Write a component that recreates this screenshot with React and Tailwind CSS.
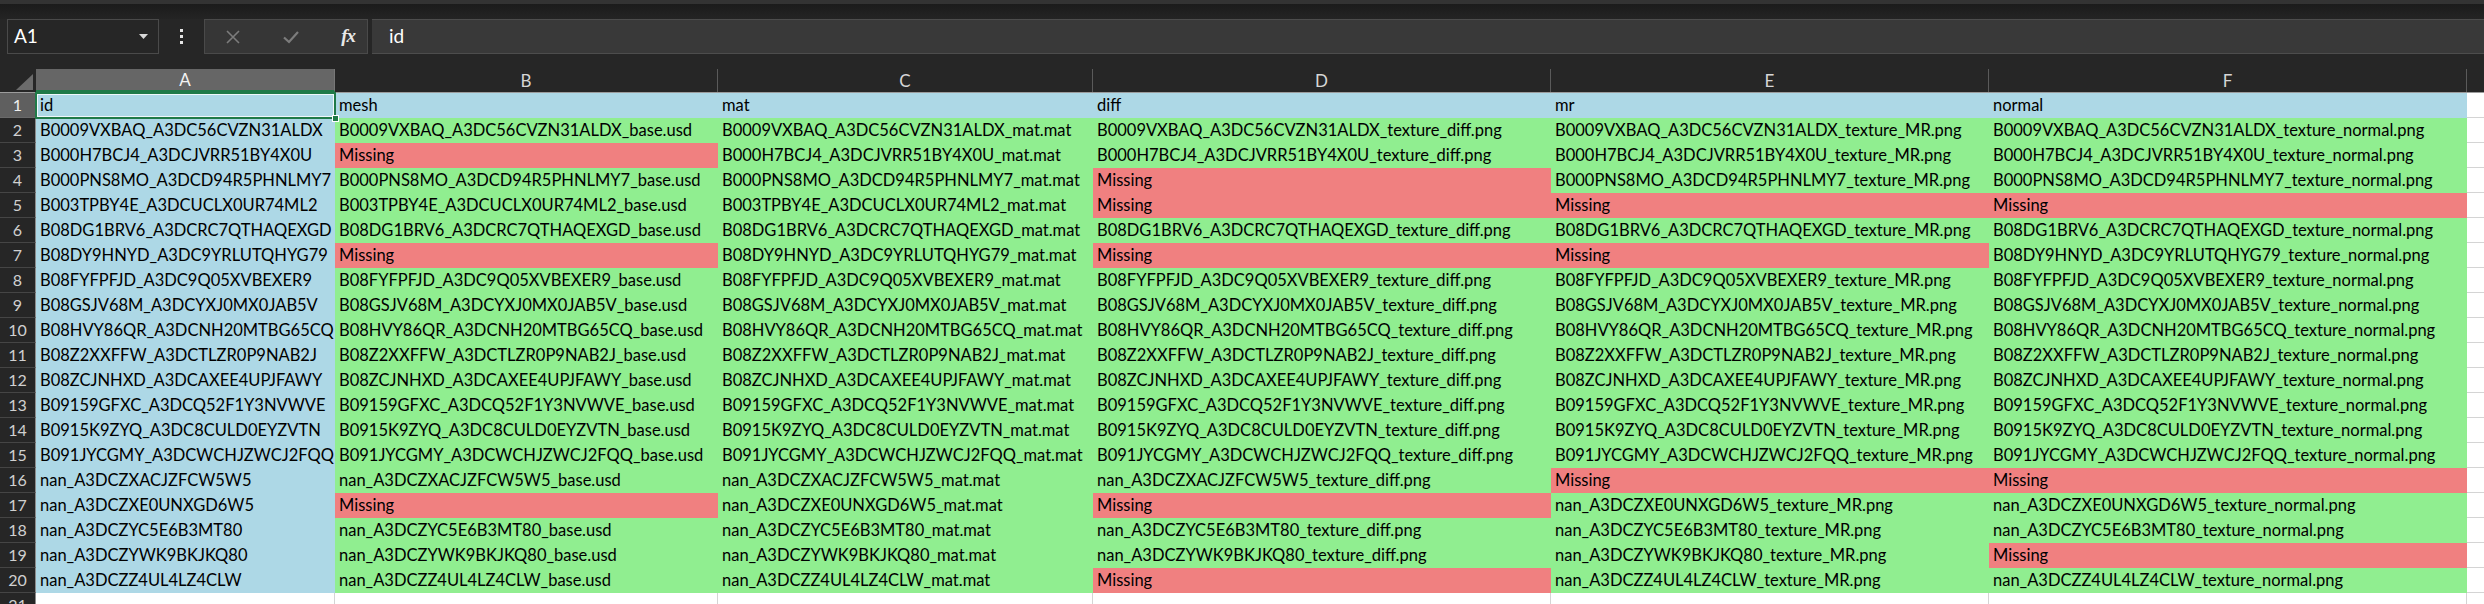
import React from 'react';

// column widths taken from the sheet (px)
const COLS = [
  { key: 'A', w: 'w-[299px]' },
  { key: 'B', w: 'w-[383px]' },
  { key: 'C', w: 'w-[375px]' },
  { key: 'D', w: 'w-[458px]' },
  { key: 'E', w: 'w-[438px]' },
  { key: 'F', w: 'w-[478px]' },
];

const HEAD = ['id', 'mesh', 'mat', 'diff', 'mr', 'normal'];
const SUFFIX = ['_base.usd', '_mat.mat', '_texture_diff.png', '_texture_MR.png', '_texture_normal.png'];

// 1 = file found, 0 = Missing (mesh, mat, diff, mr, normal)
const ROWS = [
  ['B0009VXBAQ_A3DC56CVZN31ALDX', '11111'],
  ['B000H7BCJ4_A3DCJVRR51BY4X0U', '01111'],
  ['B000PNS8MO_A3DCD94R5PHNLMY7', '11011'],
  ['B003TPBY4E_A3DCUCLX0UR74ML2', '11000'],
  ['B08DG1BRV6_A3DCRC7QTHAQEXGD', '11111'],
  ['B08DY9HNYD_A3DC9YRLUTQHYG79', '01001'],
  ['B08FYFPFJD_A3DC9Q05XVBEXER9', '11111'],
  ['B08GSJV68M_A3DCYXJ0MX0JAB5V', '11111'],
  ['B08HVY86QR_A3DCNH20MTBG65CQ', '11111'],
  ['B08Z2XXFFW_A3DCTLZR0P9NAB2J', '11111'],
  ['B08ZCJNHXD_A3DCAXEE4UPJFAWY', '11111'],
  ['B09159GFXC_A3DCQ52F1Y3NVWVE', '11111'],
  ['B0915K9ZYQ_A3DC8CULD0EYZVTN', '11111'],
  ['B091JYCGMY_A3DCWCHJZWCJ2FQQ', '11111'],
  ['nan_A3DCZXACJZFCW5W5', '11100'],
  ['nan_A3DCZXE0UNXGD6W5', '01011'],
  ['nan_A3DCZYC5E6B3MT80', '11111'],
  ['nan_A3DCZYWK9BKJKQ80', '11110'],
  ['nan_A3DCZZ4UL4LZ4CLW', '11011'],
];

const cellText = 'px-[4px] whitespace-nowrap overflow-hidden leading-[25px] text-[16.5px] text-black';

function RowNum({ n, active }) {
  return (
    <div
      className={`w-[36px] shrink-0 h-[25px] flex items-center justify-center text-[16px] border-b border-r ${
        active ? 'bg-[#5f5f5f] text-[#f0f0f0] border-b-[#6a6a6a] border-r-[#9a9a9a]' : 'bg-[#262626] text-[#d0d0d0] border-b-[#454545] border-r-[#8c8c8c]'
      }`}
    >
      {n}
    </div>
  );
}

function FormulaBar() {
  return (
    <div className="h-[35px] flex items-stretch pl-[7px]">
      {/* name box */}
      <div className="w-[152px] border border-[#4a4a4a] bg-[#262626] flex items-center justify-between pl-[6px] pr-[10px]">
        <span className="text-white text-[19px]">A1</span>
        <svg width="9" height="5" viewBox="0 0 9 5">
          <polygon points="0,0 9,0 4.5,5" fill="#d8d8d8" />
        </svg>
      </div>
      {/* vertical dots */}
      <div className="w-[45px] flex flex-col items-center justify-center gap-[3px]">
        <span className="w-[3px] h-[3px] bg-[#e6e6e6]" />
        <span className="w-[3px] h-[3px] bg-[#e6e6e6]" />
        <span className="w-[3px] h-[3px] bg-[#e6e6e6]" />
      </div>
      {/* cancel / enter / fx */}
      <div className="w-[164px] border border-[#4a4a4a] bg-[#363636] flex items-center pl-[20px] pr-[12px] justify-between">
        <svg width="16" height="16" viewBox="0 0 16 16">
          <path d="M2 2 L14 14 M14 2 L2 14" stroke="#7c7c7c" strokeWidth="1.6" fill="none" />
        </svg>
        <svg width="18" height="16" viewBox="0 0 18 16">
          <path d="M2 8.5 L7 13 L16 3" stroke="#7c7c7c" strokeWidth="2.2" fill="none" />
        </svg>
        <span className="text-[#e8e8e8] text-[19px] italic [font-family:'Liberation_Serif',serif] font-bold tracking-[-1px]">fx</span>
      </div>
      {/* formula input */}
      <div className="flex-1 ml-[4px] bg-[#393939] border-y border-[#4d4d4d] flex items-center pl-[17px]">
        <span className="text-white text-[19px]">id</span>
      </div>
    </div>
  );
}

function ColumnHeader() {
  return (
    <div className="flex h-[24px] border-b border-[#9c9c9c]">
      {/* select-all corner */}
      <div className="w-[36px] shrink-0 bg-[#262626] flex items-end justify-end pr-[3px] pb-[2px]">
        <svg width="17" height="16" viewBox="0 0 17 16">
          <polygon points="17,0 17,16 0,16" fill="#6b6b6b" />
        </svg>
      </div>
      {COLS.map((c, i) => (
        <div
          key={c.key}
          className={`${c.w} shrink-0 flex items-center justify-center text-[17px] border-r ${
            i === 0 ? 'bg-[#666666] text-[#f2f2f2] border-[#777777] border-b-2 border-b-[#1f7a48]' : 'bg-[#262626] text-[#d6d6d6] border-[#5a5a5a]'
          }`}
        >
          {c.key}
        </div>
      ))}
      <div className="flex-1 bg-[#262626]" />
    </div>
  );
}

function DataCell({ w, fill, children }) {
  return <div className={`${w} shrink-0 h-[25px] ${fill} ${cellText}`}>{children}</div>;
}

function Tail() {
  return <div className="flex-1 h-[25px] bg-white border-b border-[#d4d4d4]" />;
}

export default function App() {
  return (
    <div className="w-[2484px] h-[604px] overflow-hidden bg-[#262626] [font-family:Lato,'Liberation_Sans',sans-serif]">
      <div className="h-[4px] bg-[#333333]" />
      <div className="h-[15px] bg-gradient-to-b from-[#1b1b1b] to-[#242424]" />
      <FormulaBar />
      <div className="h-[15px] bg-[#262626]" />

      <ColumnHeader />

      {/* row 1: header names */}
      <div className="flex">
        <RowNum n={1} active />
        <div className="w-[299px] shrink-0 h-[25px] bg-[#add8e6] relative">
          <div className={cellText}>id</div>
          {/* active cell frame */}
          <div className="absolute -left-[1px] -top-[1px] w-[301px] h-[27px] border-2 border-[#1f7a48] pointer-events-none">
            <div className="w-full h-full border border-white/80" />
          </div>
          <div className="absolute -right-[4px] -bottom-[4px] w-[7px] h-[7px] bg-[#1f7a48] border border-white" />
        </div>
        {HEAD.slice(1).map((h, i) => (
          <DataCell key={h} w={COLS[i + 1].w} fill="bg-[#add8e6]">
            {h}
          </DataCell>
        ))}
        <Tail />
      </div>

      {ROWS.map(([id, flags], r) => (
        <div key={id} className="flex">
          <RowNum n={r + 2} />
          <DataCell w={COLS[0].w} fill="bg-[#add8e6]">
            {id}
          </DataCell>
          {SUFFIX.map((s, i) => {
            const ok = flags[i] === '1';
            return (
              <DataCell key={s} w={COLS[i + 1].w} fill={ok ? 'bg-[#90ee90]' : 'bg-[#f08080]'}>
                {ok ? id + s : 'Missing'}
              </DataCell>
            );
          })}
          <Tail />
        </div>
      ))}

      {/* row 21, cut off by the window */}
      <div className="flex">
        <RowNum n={21} />
        {COLS.map((c) => (
          <div key={c.key} className={`${c.w} shrink-0 h-[25px] bg-white border-r border-b border-[#d4d4d4]`} />
        ))}
        <div className="flex-1 h-[25px] bg-white" />
      </div>
    </div>
  );
}
